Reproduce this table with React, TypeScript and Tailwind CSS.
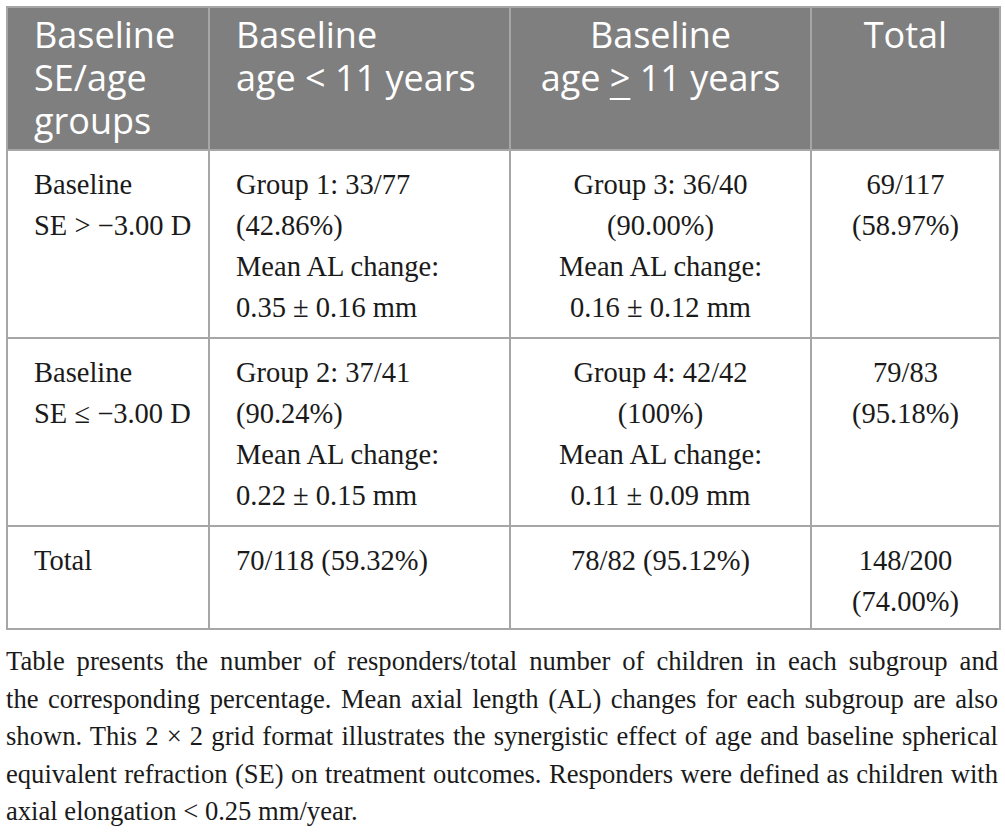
import React from "react";

const serif = "font-['Liberation_Serif','Times_New_Roman',serif]";

function Lines({ lines, center }: { lines: React.ReactNode[]; center?: boolean }) {
  return (
    <div className={center ? "text-center" : "text-left"}>
      {lines.map((l, i) => (
        <div key={i} className="whitespace-nowrap">
          {l}
        </div>
      ))}
    </div>
  );
}

export default function App() {
  const th =
    "border-[2px] border-[#a6a6a6] bg-[#7f7f7f] text-white align-top font-['Open_Sans',sans-serif] text-[36px] leading-[43px] pt-[5px] pb-[7px] pl-[26px] pr-[10px] font-normal";
  const td =
    "border-[2px] border-[#a6a6a6] align-top text-[#1a1a1a] text-[28.5px] leading-[41px] pt-[13px] pb-[9px] pl-[26px] pr-[8px]";
  const tdLast =
    "border-[2px] border-[#a6a6a6] align-top text-[#1a1a1a] text-[28.5px] leading-[41px] pt-[13px] pb-[6px] pl-[26px] pr-[8px]";
  const caption = [
    "Table presents the number of responders/total number of children in each subgroup and",
    "the corresponding percentage. Mean axial length (AL) changes for each subgroup are also",
    "shown. This 2 × 2 grid format illustrates the synergistic effect of age and baseline spherical",
    "equivalent refraction (SE) on treatment outcomes. Responders were defined as children with",
  ];
  return (
    <div className="w-[1005px] h-[832px] bg-white overflow-hidden">
      <div className="pt-[6px] px-[6px]">
        <table className={`w-[993px] border-collapse table-fixed ${serif}`}>
          <colgroup>
            <col className="w-[202px]" />
            <col className="w-[301px]" />
            <col className="w-[301px]" />
            <col className="w-[189px]" />
          </colgroup>
          <thead>
            <tr>
              <th className={`${th} text-left`}>
                <Lines lines={["Baseline", "SE/age", "groups"]} />
              </th>
              <th className={`${th} text-left`}>
                <Lines lines={["Baseline", "age < 11 years"]} />
              </th>
              <th className={`${th} !pl-[10px]`}>
                <Lines
                  center
                  lines={[
                    "Baseline",
                    <>
                      age <span className="underline underline-offset-[7px] decoration-[2px]">&gt;</span> 11 years
                    </>,
                  ]}
                />
              </th>
              <th className={`${th} !pl-[10px]`}>
                <Lines center lines={["Total"]} />
              </th>
            </tr>
          </thead>
          <tbody>
            <tr>
              <td className={td}>
                <Lines lines={["Baseline", "SE > −3.00 D"]} />
              </td>
              <td className={td}>
                <Lines lines={["Group 1: 33/77", "(42.86%)", "Mean AL change:", "0.35 ± 0.16 mm"]} />
              </td>
              <td className={`${td} !pl-[8px]`}>
                <Lines center lines={["Group 3: 36/40", "(90.00%)", "Mean AL change:", "0.16 ± 0.12 mm"]} />
              </td>
              <td className={`${td} !pl-[8px]`}>
                <Lines center lines={["69/117", "(58.97%)"]} />
              </td>
            </tr>
            <tr>
              <td className={td}>
                <Lines lines={["Baseline", "SE ≤ −3.00 D"]} />
              </td>
              <td className={td}>
                <Lines lines={["Group 2: 37/41", "(90.24%)", "Mean AL change:", "0.22 ± 0.15 mm"]} />
              </td>
              <td className={`${td} !pl-[8px]`}>
                <Lines center lines={["Group 4: 42/42", "(100%)", "Mean AL change:", "0.11 ± 0.09 mm"]} />
              </td>
              <td className={`${td} !pl-[8px]`}>
                <Lines center lines={["79/83", "(95.18%)"]} />
              </td>
            </tr>
            <tr>
              <td className={tdLast}>
                <Lines lines={["Total"]} />
              </td>
              <td className={tdLast}>
                <Lines lines={["70/118 (59.32%)"]} />
              </td>
              <td className={`${tdLast} !pl-[8px]`}>
                <Lines center lines={["78/82 (95.12%)"]} />
              </td>
              <td className={`${tdLast} !pl-[8px]`}>
                <Lines center lines={["148/200", "(74.00%)"]} />
              </td>
            </tr>
          </tbody>
        </table>
        <div className={`${serif} mt-[13px] text-[26.6px] leading-[37.5px] text-[#1a1a1a] w-[992px]`}>
          {caption.map((l, i) => (
            <div key={i} className="whitespace-nowrap text-justify [text-align-last:justify]">
              {l}
            </div>
          ))}
          <div className="whitespace-nowrap">axial elongation &lt; 0.25 mm/year.</div>
        </div>
      </div>
    </div>
  );
}
